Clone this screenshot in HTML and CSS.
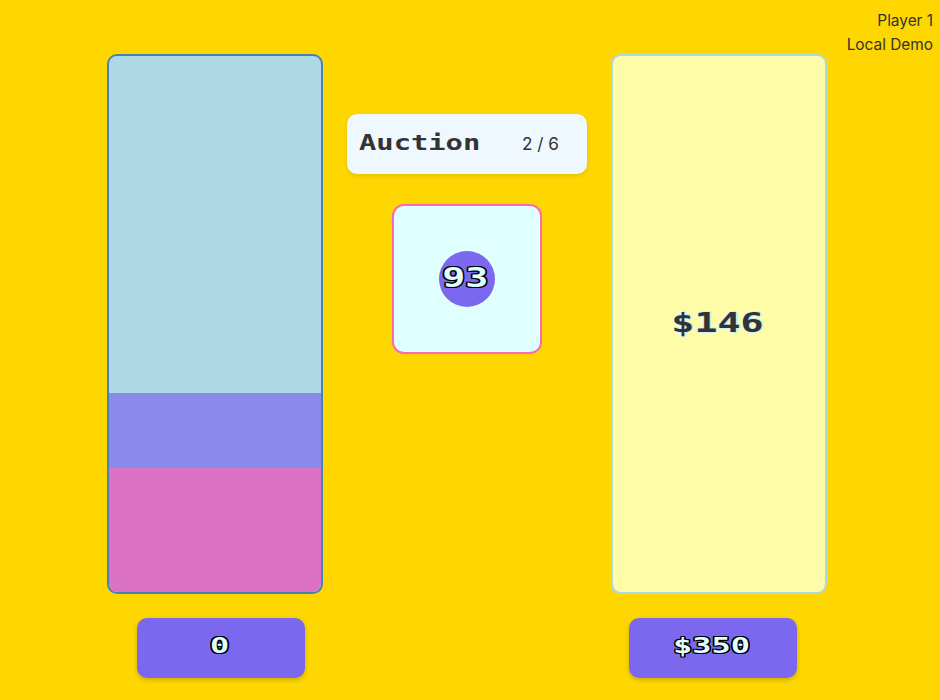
FILE: index.html
```html
<!DOCTYPE html>
<html lang="en">
<head>
<meta charset="utf-8">
<title>Auction</title>
<link rel="stylesheet" href="styles.css">
</head>
<body>
<header class="player"><div>Player 1</div><div>Local Demo</div></header>
<main class="board">
  <section class="column">
    <div class="tank"><div class="fill-blue"></div><div class="fill-pink"></div></div>
    <div class="total total-left"><span class="pixel outline">0</span></div>
  </section>
  <section class="center">
    <div class="status"><h1 class="pixel">Auction</h1><span class="round">2 / 6</span></div>
    <div class="item"><div class="coin"><span class="pixel outline">93</span></div></div>
  </section>
  <section class="column">
    <div class="tank bid"><span class="pixel amount">$146</span></div>
    <div class="total total-right"><span class="pixel outline">$350</span></div>
  </section>
</main>
</body>
</html>
```
FILE: styles.css
```css
* { box-sizing: border-box; }
body {
  margin: 0;
  height: 700px;
  overflow: hidden;
  background: #ffd700;
  color: #333;
  font-family: Inter, sans-serif;
}
.player {
  position: absolute;
  top: 9px;
  right: 7px;
  text-align: right;
  font-size: 15.4px;
  line-height: 24px;
}
.board { display: flex; gap: 24px; padding: 54px 0 0 107px; }
.column { width: 216px; }
.tank {
  display: flex;
  flex-direction: column;
  justify-content: flex-end;
  height: 540px;
  border: 2px solid #4682b4;
  border-radius: 10px;
  background: #add8e6;
  overflow: hidden;
}
.fill-blue { height: 75px; background: #8a8aec; }
.fill-pink { height: 124px; background: #db72c4; }
.bid {
  align-items: center;
  justify-content: center;
  border-color: #add8e6;
  background: #fffca8;
}
.pixel {
  display: inline-block;
  font-family: "DejaVu Sans Mono", monospace;
  font-weight: bold;
  line-height: 1;
}
.outline {
  color: #e0ffff;
  text-shadow: -1px -1px #000, 0 -1px #000, 1px -1px #000, -1px 0 #000,
    1px 0 #000, -1px 1px #000, 0 1px #000, 1px 1px #000;
}
.amount {
  font-size: 27px;
  transform: scaleX(1.42);
  text-shadow: 1px 0 #c8f0ff, -1px 0 #c8f0ff, 0 1px #c8f0ff, 0 -1px #c8f0ff;
  margin: 0 2px 3px 0;
}
.total {
  display: flex;
  align-items: center;
  justify-content: center;
  width: 168px;
  height: 60px;
  margin-top: 24px;
  padding: 0 3px 5px 0;
  border-radius: 10px;
  background: #7b68ee;
  box-shadow: 0 2px 5px rgba(0, 0, 0, .2);
}
.total .pixel { font-size: 22px; transform: scaleX(1.45); }
.total-left { margin-left: 30px; }
.total-right { margin-left: 18px; }
.center { width: 240px; padding-top: 60px; }
.status {
  display: flex;
  align-items: center;
  justify-content: space-between;
  height: 60px;
  padding: 0 28px 0 12px;
  border-radius: 10px;
  background: #f0f8ff;
  box-shadow: 0 2px 5px rgba(0, 0, 0, .1);
}
.status h1 {
  margin: 0 0 1px;
  font-size: 21px;
  transform: scaleX(1.37);
  transform-origin: left;
}
.round { margin-bottom: 1px; font-size: 17.2px; }
.item {
  display: flex;
  align-items: center;
  justify-content: center;
  width: 150px;
  height: 150px;
  margin: 30px auto 0;
  border: 2px solid #ff69b4;
  border-radius: 12px;
  background: #e0ffff;
}
.coin {
  display: flex;
  align-items: center;
  justify-content: center;
  width: 56px;
  height: 56px;
  padding: 0 3px 3px 0;
  border-radius: 50%;
  background: #7b68ee;
}
.coin .pixel { font-size: 27px; transform: scaleX(1.42); }
```
